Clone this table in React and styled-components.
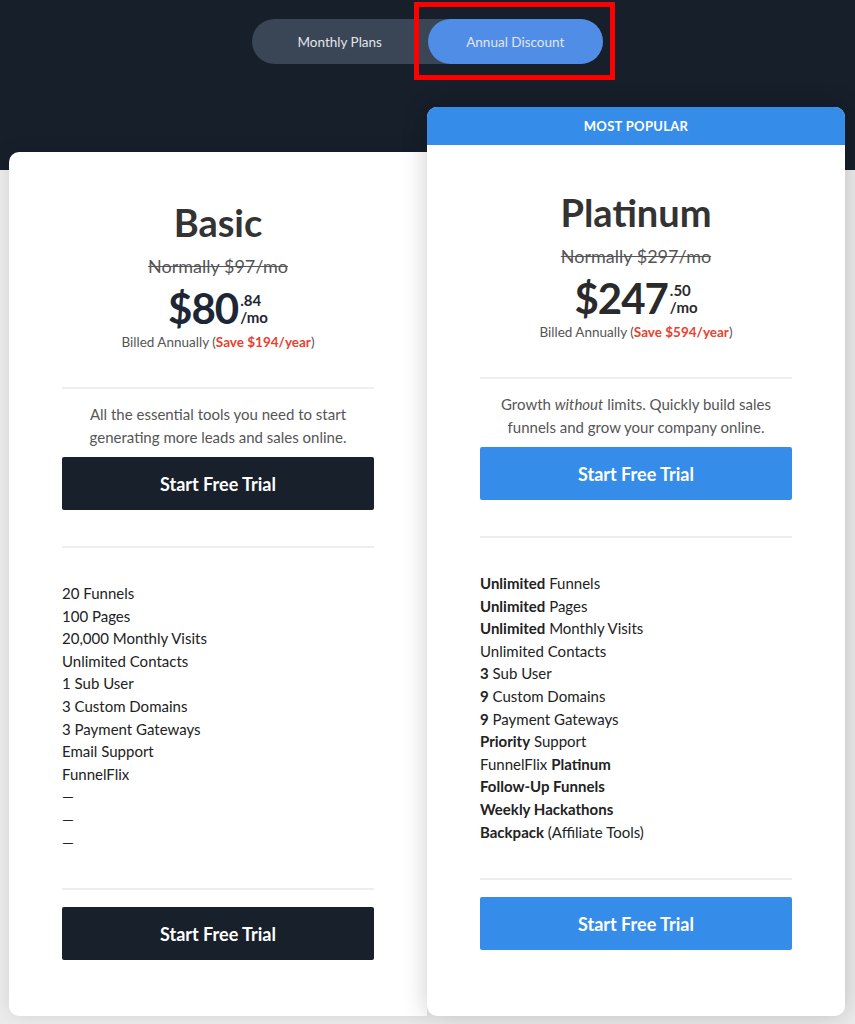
import React from 'react';
import styled, { createGlobalStyle } from 'styled-components';

const GlobalStyle = createGlobalStyle`
  body {
    margin: 0;
    font-family: Lato, "Open Sans", sans-serif;
    background: #ececec;
  }
`;

const plans = [
  {
    id: 'basic',
    name: 'Basic',
    normal: 'Normally $97/mo',
    amount: '$80',
    cents: '.84',
    save: 'Save $194/year',
    text: 'All the essential tools you need to start generating more leads and sales online.',
    features: [
      '20 Funnels',
      '100 Pages',
      '20,000 Monthly Visits',
      'Unlimited Contacts',
      '1 Sub User',
      '3 Custom Domains',
      '3 Payment Gateways',
      'Email Support',
      'FunnelFlix',
      '—',
      '—',
      '—',
    ],
  },
  {
    id: 'platinum',
    name: 'Platinum',
    popular: true,
    normal: 'Normally $297/mo',
    amount: '$247',
    cents: '.50',
    save: 'Save $594/year',
    text: (
      <>
        Growth <i>without</i> limits. Quickly build sales funnels and grow your company online.
      </>
    ),
    features: [
      <><b>Unlimited</b> Funnels</>,
      <><b>Unlimited</b> Pages</>,
      <><b>Unlimited</b> Monthly Visits</>,
      'Unlimited Contacts',
      <><b>3</b> Sub User</>,
      <><b>9</b> Custom Domains</>,
      <><b>9</b> Payment Gateways</>,
      <><b>Priority</b> Support</>,
      <>FunnelFlix <b>Platinum</b></>,
      <b>Follow-Up Funnels</b>,
      <b>Weekly Hackathons</b>,
      <><b>Backpack</b> (Affiliate Tools)</>,
    ],
  },
];

export default function App() {
  return (
    <>
      <GlobalStyle />
      <Page>
        <Toggle>
          <ToggleOption>Monthly Plans</ToggleOption>
          <Marked>
            <ToggleOption $active>Annual Discount</ToggleOption>
            <Highlight />
          </Marked>
        </Toggle>
        <Cards>
          {plans.map((p) => (
            <Card key={p.id} $popular={p.popular}>
              {p.popular && <Ribbon>MOST POPULAR</Ribbon>}
              <Body $popular={p.popular}>
                <Title>{p.name}</Title>
                <Normal>{p.normal}</Normal>
                <PriceRow $popular={p.popular}>
                  <Amount>{p.amount}</Amount>
                  <Suffix>
                    <span>{p.cents}</span>
                    <span>/mo</span>
                  </Suffix>
                </PriceRow>
                <Billed>
                  Billed Annually (<Save>{p.save}</Save>)
                </Billed>
                <Divider $top={35} />
                <Desc>{p.text}</Desc>
                <Button $blue={p.popular} $top={8}>Start Free Trial</Button>
                <Divider $top={36} />
                <Features>
                  {p.features.map((f, i) => (
                    <li key={i}>{f}</li>
                  ))}
                </Features>
                <Divider $top={35} />
                <Button $blue={p.popular} $top={17}>Start Free Trial</Button>
              </Body>
            </Card>
          ))}
        </Cards>
      </Page>
    </>
  );
}

const Page = styled.div`
  min-height: 1024px;
  background: linear-gradient(#161f2a 0, #161f2a 170px, #ececec 170px);
  padding-top: 19px;
  display: flex;
  flex-direction: column;
  align-items: center;
`;

const Toggle = styled.div`
  display: flex;
  width: 351px;
  height: 45px;
  border-radius: 23px;
  background: #3a4555;
`;

const Marked = styled.div`
  position: relative;
  flex: 1;
  display: flex;
`;

const Highlight = styled.div`
  position: absolute;
  left: -14px;
  right: -12px;
  top: -17px;
  bottom: -16px;
  border: 5px solid #f00;
  pointer-events: none;
`;

const ToggleOption = styled.div`
  flex: 1;
  display: flex;
  align-items: center;
  justify-content: center;
  border-radius: 23px;
  font-size: 13.5px;
  color: #e2e6ec;
  background: ${(p) => (p.$active ? '#4f8de6' : 'transparent')};
`;

const Cards = styled.div`
  margin-top: 43px;
  align-self: stretch;
  padding: 0 10px 8px 9px;
  display: flex;
`;

const Card = styled.div`
  width: 418px;
  margin-top: ${(p) => (p.$popular ? 0 : 45)}px;
  background: #fff;
  border-radius: ${(p) => (p.$popular ? '10px' : '10px 0 0 10px')};
  overflow: hidden;
  position: relative;
  z-index: ${(p) => (p.$popular ? 2 : 1)};
  box-shadow: 0 0 ${(p) => (p.$popular ? '26px rgba(0, 0, 0, 0.2)' : '20px rgba(0, 0, 0, 0.1)')};
  display: flex;
  flex-direction: column;
`;

const Ribbon = styled.div`
  height: 38px;
  background: #368de9;
  color: #fff;
  font-size: 13px;
  font-weight: 700;
  letter-spacing: 0.3px;
  display: flex;
  align-items: center;
  justify-content: center;
`;

const Body = styled.div`
  padding: ${(p) => (p.$popular ? 44 : 47)}px 53px 56px;
  display: flex;
  flex-direction: column;
  align-items: stretch;
  text-align: center;
`;

const Title = styled.div`
  font-size: 38px;
  line-height: 46px;
  font-weight: 700;
  color: #333;
`;

const Normal = styled.div`
  margin-top: 9px;
  font-size: 18px;
  line-height: 24px;
  color: #555;
  text-decoration: line-through;
`;

const PriceRow = styled.div`
  margin-top: 6px;
  height: 48px;
  display: flex;
  justify-content: center;
  align-items: center;
  color: ${(p) => (p.$popular ? '#2a2a2a' : '#1c2635')};
`;

const Amount = styled.span`
  font-size: 42px;
  font-weight: 700;
  line-height: 48px;
  letter-spacing: -1px;
`;

const Suffix = styled.span`
  display: flex;
  flex-direction: column;
  align-items: flex-start;
  font-size: 15px;
  font-weight: 700;
  line-height: 17px;
  margin-left: 2px;
  padding-top: 2px;
`;

const Billed = styled.div`
  font-size: 13.5px;
  line-height: 20px;
  color: #555;
`;

const Save = styled.span`
  color: #e8412f;
  font-weight: 700;
`;

const Divider = styled.div`
  margin-top: ${(p) => p.$top}px;
  height: 2px;
  background: #eee;
`;

const Desc = styled.p`
  margin: 14px 0 0;
  font-size: 15px;
  line-height: 23px;
  color: #555;
  padding: 0 16px;

  i {
    display: inline-block;
  }
`;

const Button = styled.button`
  margin-top: ${(p) => p.$top}px;
  height: 53px;
  border: none;
  border-radius: 2px;
  background: ${(p) => (p.$blue ? '#368de9' : '#17202b')};
  color: #fff;
  font-family: inherit;
  font-size: 18px;
  font-weight: 700;
  cursor: pointer;
`;

const Features = styled.ul`
  margin: 34px 0 0;
  padding: 0;
  list-style: none;
  text-align: left;
  font-size: 15px;
  line-height: 22.6px;
  color: #222;

  b {
    font-weight: 700;
  }
`;
